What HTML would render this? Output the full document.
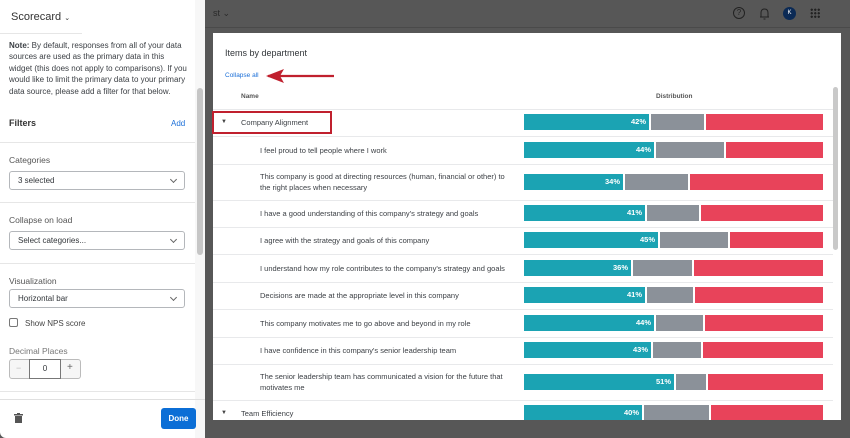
<!DOCTYPE html>
<html><head><meta charset="utf-8"><style>
*{box-sizing:border-box;margin:0;padding:0}
body{width:850px;height:438px;overflow:hidden;background:#575757;font-family:"Liberation Sans",sans-serif;position:relative;color:#32363a}
.a{position:absolute}
.t{font-size:7.5px;color:#3b3f44}
.bar{position:absolute;left:524px;width:299px;height:16px;display:flex}
.bar div{height:100%}
.tl{background:#1ba3b3;color:#fff;font-size:7.5px;font-weight:bold;text-align:right;padding-right:3px;line-height:16px}
.gr{background:#8b9199;margin-left:2px}
.rd{background:#e8435a;margin-left:2px;flex:1}
.sep{position:absolute;left:213px;width:620px;height:1px;background:#e8e9eb}
.sel{position:absolute;left:9px;width:176px;height:19px;border:1px solid #b4b7bb;border-radius:3px;font-size:8px;line-height:17px;padding-left:8px;background:#fff}
.sel:after{content:"";position:absolute;right:8px;top:5px;width:4px;height:4px;border-right:1px solid #666;border-bottom:1px solid #666;transform:rotate(45deg)}
.lab{position:absolute;left:9px;font-size:8.5px;color:#555}
.hr{position:absolute;left:0;width:195px;height:1px;background:#e6e6e6}
</style></head><body>
<div class="a" style="left:213px;top:8px;font-size:9px;color:#2a2a2a">st ⌄</div>
<div class="a" style="left:733px;top:7px;width:12px;height:12px;border:1px solid #222;border-radius:50%;font-size:8px;text-align:center;line-height:10px;color:#222">?</div>
<svg class="a" style="left:759px;top:7px" width="11" height="13"><path d="M2 10 L2 6 Q2 2 5.5 2 Q9 2 9 6 L9 10 Z M1 10 L10 10 M4.5 12 L6.5 12" stroke="#222" fill="none" stroke-width="1"/></svg>
<div class="a" style="left:783px;top:7px;width:13px;height:13px;border-radius:50%;background:#0b2a55;color:#fff;font-size:6px;text-align:center;line-height:13px">K</div>
<div class="a" style="left:810px;top:8px;width:10px;height:10px;background:radial-gradient(circle,#222 1px,transparent 1.3px) 0 0/3.5px 3.5px"></div>
<div class="a" style="left:205px;top:27px;width:645px;height:1px;background:#4a4a4a"></div>

<div class="a" style="left:213px;top:33px;width:628px;height:387px;background:#fff"></div>
<div class="a" style="left:225px;top:48px;font-size:9px;color:#32363a">Items by department</div>
<div class="a" style="left:225px;top:72px;font-size:6.5px;color:#1b6fd8">Collapse all</div>
<svg class="a" style="left:264px;top:66px" width="72" height="20"><path d="M4 10 L70 10" stroke="#c0202e" stroke-width="2.2"/><path d="M2 10 L20 3 L16 10 L20 17 Z" fill="#c0202e"/></svg>
<div class="a" style="left:241px;top:93px;font-size:6.5px;font-weight:bold;color:#555">Name</div>
<div class="a" style="left:656px;top:93px;font-size:6.5px;font-weight:bold;color:#555">Distribution</div>
<div class="a" style="left:833px;top:87px;width:5px;height:163px;background:#c9c9c9;border-radius:3px"></div>
<div class="sep" style="top:109px"></div>
<div class="sep" style="top:136px"></div>
<div class="sep" style="top:164px"></div>
<div class="sep" style="top:200px"></div>
<div class="sep" style="top:227px"></div>
<div class="sep" style="top:254px"></div>
<div class="sep" style="top:282px"></div>
<div class="sep" style="top:309px"></div>
<div class="sep" style="top:337px"></div>
<div class="sep" style="top:364px"></div>
<div class="sep" style="top:400px"></div>
<div class="a" style="left:212px;top:111px;width:120px;height:23px;border:2.5px solid #c0202e"></div>
<div class="a" style="left:221px;top:119px;font-size:6px;color:#444">▼</div>
<div class="a t" style="left:241px;top:118px">Company Alignment</div>
<div class="a" style="left:221px;top:410px;font-size:6px;color:#444">▼</div>
<div class="a t" style="left:241px;top:409px">Team Efficiency</div>
<div class="a t" style="left:260px;top:146px">I feel proud to tell people where I work</div>
<div class="a t" style="left:260px;top:171px;line-height:11px">This company is good at directing resources (human, financial or other) to<br>the right places when necessary</div>
<div class="a t" style="left:260px;top:209px">I have a good understanding of this company's strategy and goals</div>
<div class="a t" style="left:260px;top:236px">I agree with the strategy and goals of this company</div>
<div class="a t" style="left:260px;top:264px">I understand how my role contributes to the company's strategy and goals</div>
<div class="a t" style="left:260px;top:291px">Decisions are made at the appropriate level in this company</div>
<div class="a t" style="left:260px;top:319px">This company motivates me to go above and beyond in my role</div>
<div class="a t" style="left:260px;top:346px">I have confidence in this company's senior leadership team</div>
<div class="a t" style="left:260px;top:371px;line-height:11px">The senior leadership team has communicated a vision for the future that<br>motivates me</div>

<div class="bar" style="top:114px"><div class="tl" style="width:125px">42%</div><div class="gr" style="width:53px"></div><div class="rd"></div></div>
<div class="bar" style="top:142px"><div class="tl" style="width:130px">44%</div><div class="gr" style="width:68px"></div><div class="rd"></div></div>
<div class="bar" style="top:174px"><div class="tl" style="width:99px">34%</div><div class="gr" style="width:63px"></div><div class="rd"></div></div>
<div class="bar" style="top:205px"><div class="tl" style="width:121px">41%</div><div class="gr" style="width:52px"></div><div class="rd"></div></div>
<div class="bar" style="top:232px"><div class="tl" style="width:134px">45%</div><div class="gr" style="width:68px"></div><div class="rd"></div></div>
<div class="bar" style="top:260px"><div class="tl" style="width:107px">36%</div><div class="gr" style="width:59px"></div><div class="rd"></div></div>
<div class="bar" style="top:287px"><div class="tl" style="width:121px">41%</div><div class="gr" style="width:46px"></div><div class="rd"></div></div>
<div class="bar" style="top:315px"><div class="tl" style="width:130px">44%</div><div class="gr" style="width:47px"></div><div class="rd"></div></div>
<div class="bar" style="top:342px"><div class="tl" style="width:127px">43%</div><div class="gr" style="width:48px"></div><div class="rd"></div></div>
<div class="bar" style="top:374px"><div class="tl" style="width:150px">51%</div><div class="gr" style="width:30px"></div><div class="rd"></div></div>
<div class="bar" style="top:405px;height:15px"><div class="tl" style="width:118px;line-height:15px">40%</div><div class="gr" style="width:65px"></div><div class="rd"></div></div>

<div class="a" style="left:0;top:0;width:205px;height:438px;background:#fff;border-bottom-left-radius:6px"></div>
<div class="a" style="left:195px;top:0;width:10px;height:438px;background:#f7f7f7"></div>
<div class="a" style="left:197px;top:88px;width:6px;height:167px;background:#c6c6c6;border-radius:3px"></div>
<div class="a" style="left:11px;top:11px;font-size:11px;color:#333">Scorecard <span style="font-size:7px">⌄</span></div>
<div class="a" style="left:0;top:33px;width:82px;height:1px;background:#e6e6e6"></div>
<div class="a" style="left:9px;top:40px;width:178px;font-size:8px;line-height:11.4px;color:#3b3f44"><b>Note:</b> By default, responses from all of your data sources are used as the primary data in this widget (this does not apply to comparisons). If you would like to limit the primary data to your primary data source, please add a filter for that below.</div>
<div class="a" style="left:9px;top:118px;font-size:9px;font-weight:bold;color:#333">Filters</div>
<div class="a" style="left:171px;top:119px;font-size:8px;color:#1b6fd8">Add</div>
<div class="hr" style="top:142px"></div>
<div class="lab" style="top:155px">Categories</div>
<div class="sel" style="top:171px">3 selected</div>
<div class="hr" style="top:202px"></div>
<div class="lab" style="top:215px">Collapse on load</div>
<div class="sel" style="top:231px">Select categories...</div>
<div class="hr" style="top:263px"></div>
<div class="lab" style="top:276px">Visualization</div>
<div class="sel" style="top:289px">Horizontal bar</div>
<div class="a" style="left:9px;top:318px;width:9px;height:9px;border:1px solid #777;border-radius:2px"></div>
<div class="a" style="left:25px;top:319px;font-size:8px;color:#444">Show NPS score</div>
<div class="lab" style="top:346px;color:#777">Decimal Places</div>
<div class="a" style="left:9px;top:359px;width:72px;height:20px;border:1px solid #bbb;border-radius:3px;background:#f6f6f6"></div>
<div class="a" style="left:29px;top:359px;width:32px;height:20px;border:1px solid #777;background:#fff;font-size:8px;text-align:center;line-height:18px">0</div>
<div class="a" style="left:16px;top:363px;font-size:9px;color:#bbb">−</div>
<div class="a" style="left:67px;top:362px;font-size:10px;color:#666">+</div>
<div class="hr" style="top:391px"></div>
<div class="a" style="left:0;top:399px;width:205px;height:1px;background:#e0e0e0"></div>
<svg class="a" style="left:14px;top:413px" width="9" height="10"><rect x="0" y="1" width="9" height="1.5" fill="#555"/><rect x="3" y="0" width="3" height="1.5" fill="#555"/><rect x="1" y="3" width="7" height="7" fill="#555"/></svg>
<div class="a" style="left:161px;top:408px;width:35px;height:21px;background:#0b6ed6;border-radius:3px;color:#fff;font-size:8px;font-weight:bold;text-align:center;line-height:21px">Done</div>
</body></html>
